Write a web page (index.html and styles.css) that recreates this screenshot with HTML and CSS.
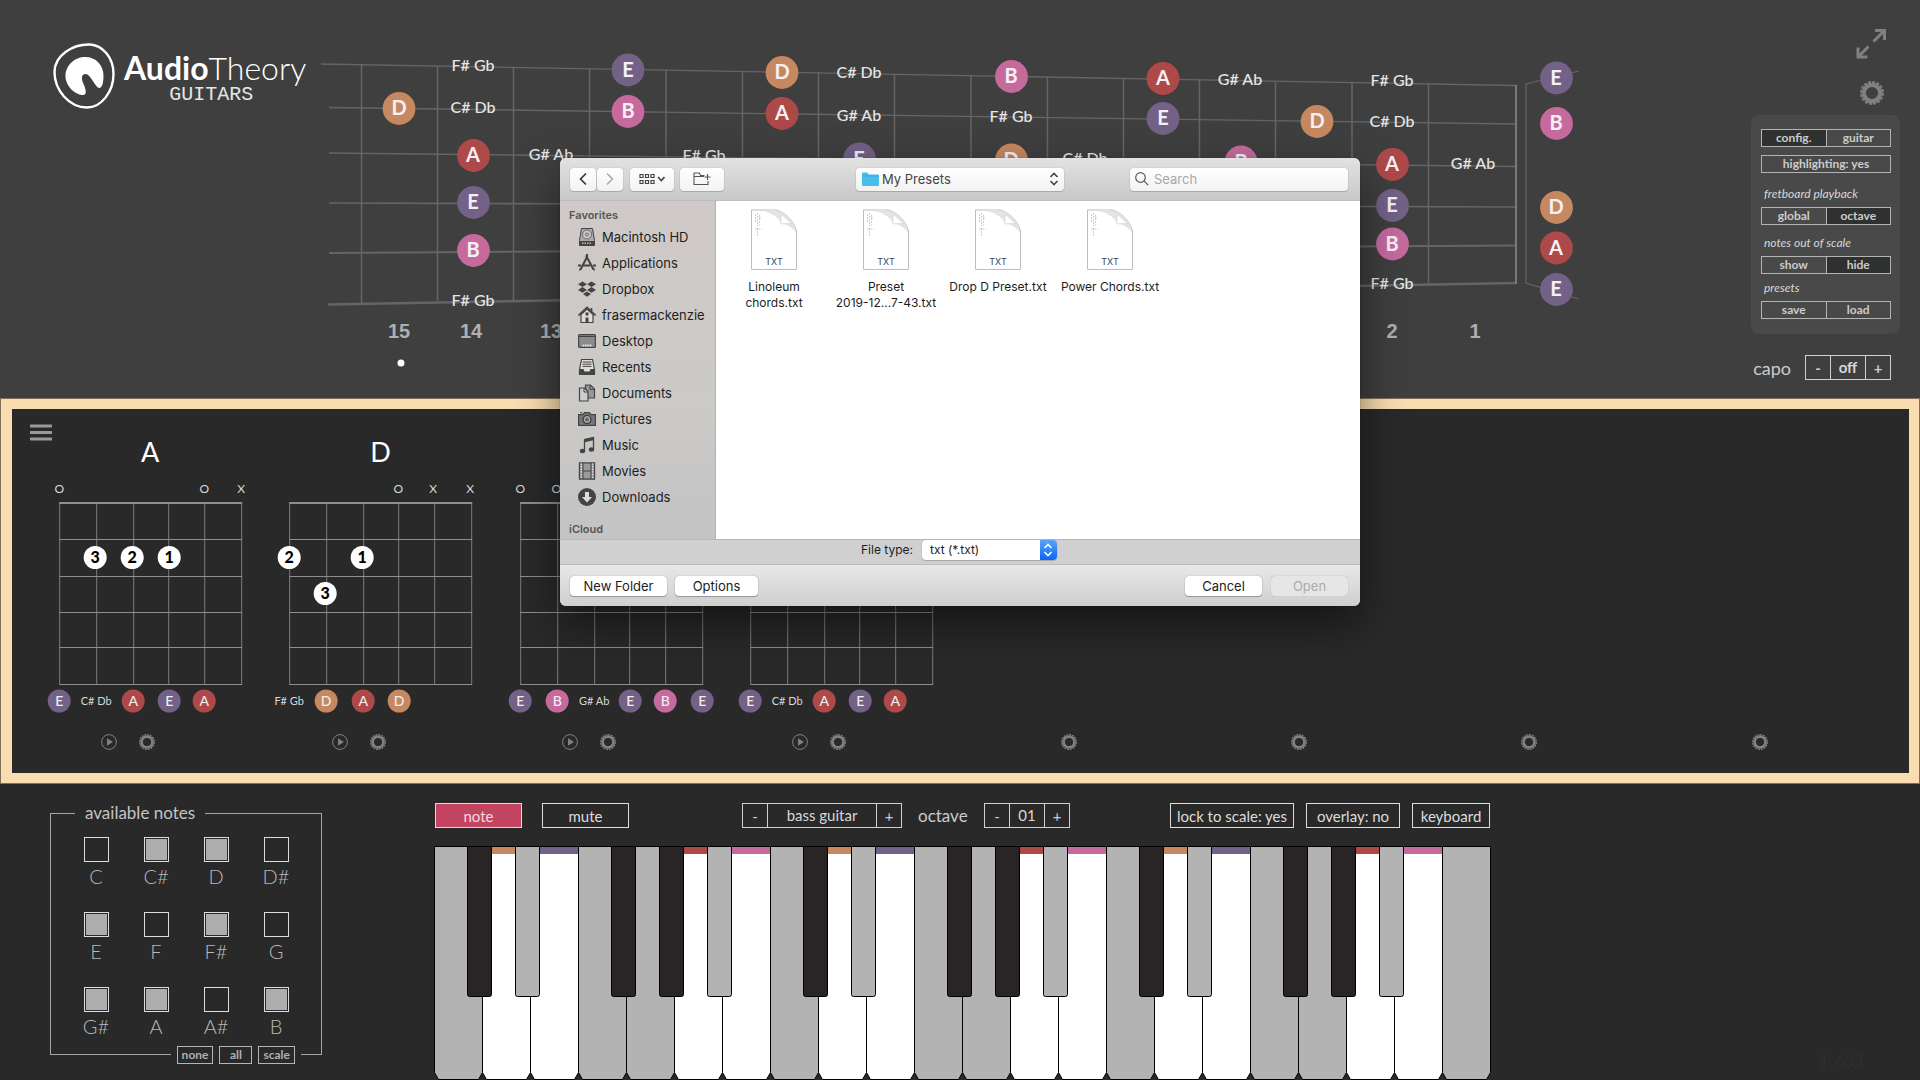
FILE: index.html
```html
<!DOCTYPE html>
<html lang="en">
<head>
<meta charset="utf-8">
<title>AudioTheory Guitars</title>
<link rel="stylesheet" href="styles.css">
</head>
<body>
<svg class="defs" aria-hidden="true">
  <symbol id="gear" viewBox="0 0 24 24">
    <circle cx="12" cy="12" r="8.200" fill="none" stroke="currentColor" stroke-width="4.200"/>
    <circle cx="12" cy="12" r="11" fill="none" stroke="currentColor" stroke-width="2" stroke-dasharray="2.900 1.420"/>
  </symbol>
  <symbol id="play" viewBox="0 0 16 16">
    <circle cx="8" cy="8" r="7.400" fill="none" stroke="currentColor" stroke-width="1"/>
    <path d="M6 4.300 12 8 6 11.700Z" fill="currentColor"/>
  </symbol>
  <symbol id="updown" viewBox="0 0 10 14">
    <path d="M1.500 5 5 1.500 8.500 5M1.500 9 5 12.500 8.500 9" fill="none" stroke="currentColor" stroke-width="1.600"/>
  </symbol>
  <symbol id="txtfile" viewBox="0 0 48 62">
    <path d="M1.500 1H26C35 3 44 12 46.500 22V60.500H1.500Z" fill="#fff" stroke="#bdbdbd"/>
    <path d="M10 1.500H26C35 3 44 12 46 24 42 18 38 15.500 31 15 29 8 20 3 10 1.500Z" fill="#e4e4e4"/>
    <path d="M31 5 42 15C38 14 35 14.500 31 15Z" fill="#fff" stroke="#cfcfcf" stroke-width=".6"/>
    <path d="M5.500 5V14M7.500 4V17M9.500 6V16M7.500 19V28M5 20H12M9 9H11" stroke="#ccc" stroke-width="1" stroke-dasharray="2 1"/>
  </symbol>
  <symbol id="chordgrid" viewBox="0 0 230 200">
    <path d="M61.500 10V191M98.500 10V191M133.500 10V191M169.500 10V191M24.500 10V191M206.500 10V191" stroke="#7d7d7d"/>
    <path d="M24 46.500H207M24 83.500H207M24 119.500H207M24 154.500H207M24 191.500H207" stroke="#8e8e8e"/>
    <path d="M24 10H207" stroke="#8e8e8e" stroke-width="2"/>
  </symbol>
  <symbol id="octavekeys" viewBox="0 0 338 234" overflow="visible">
    <g stroke="#000" stroke-width="1">
      <path class="key-off" d="M.5.5h48v226l-4 7h-40l-4-7z"/>
      <path class="key-on" d="M48.500.5h48v226l-4 7h-40l-4-7z"/>
      <path class="key-on" d="M96.500.5h48v226l-4 7h-40l-4-7z"/>
      <path class="key-off" d="M144.500.5h48v226l-4 7h-40l-4-7z"/>
      <path class="key-off" d="M192.500.5h48v226l-4 7h-40l-4-7z"/>
      <path class="key-on" d="M240.500.5h48v226l-4 7h-40l-4-7z"/>
      <path class="key-on" d="M288.500.5h48v226l-4 7h-40l-4-7z"/>
    </g>
    <path class="fill-d" d="M49 1h47v7H49z"/><path class="fill-e" d="M97 1h47v7H97z"/>
    <path class="fill-a" d="M241 1h47v7h-47z"/><path class="fill-b" d="M289 1h47v7h-47z"/>
    <g stroke="#000" stroke-width="1">
      <path class="key-black" d="M33.500.5h24v148q0 2-2 2h-20q-2 0-2-2z"/>
      <path class="key-off" d="M81.500.5h24v148q0 2-2 2h-20q-2 0-2-2z"/>
      <path class="key-black" d="M177.500.5h24v148q0 2-2 2h-20q-2 0-2-2z"/>
      <path class="key-black" d="M225.500.5h24v148q0 2-2 2h-20q-2 0-2-2z"/>
      <path class="key-off" d="M273.500.5h24v148q0 2-2 2h-20q-2 0-2-2z"/>
    </g>
  </symbol>
</svg>

<header class="neck">
  <h1 class="brand">
    <svg class="brand-mark" viewBox="0 0 62 66" aria-hidden="true">
      <path d="M37 1.500C49 2 60.500 14 60.500 31 60.500 48 49 64.500 34 64.500 16 64.500 1.500 47 1.500 29 1.500 12 20 1 37 1.500Z" fill="none" stroke="#fff" stroke-width="2.400"/>
      <path d="M32 14C43 14 50.500 22 50.500 33 50.500 40 49 45 46.500 45 42 45 38 31 32.500 31 28 31 28 36 31 42 33 47 34 52 30 52 23 52 12.500 44 12.500 33 12.500 22 22 14 32 14Z" fill="#fff"/>
    </svg>
    <span class="brand-name"><span class="brand-line"><b>Audio</b>Theory</span><small>GUITARS</small></span>
  </h1>

  <svg class="fretboard" viewBox="315 0 1275 398" role="img" aria-label="Fretboard">
    <g stroke="#656565" fill="none">
      <path d="M361.500 64V303M437.500 66V301M513.500 67V300M589.500 68V299M666 70V297M742.500 71V296M818.500 72V295M894.500 74V293M971 75V292M1047.500 77V291M1123.500 78V290M1199.500 79V289M1275.500 81V287M1352 82V286M1428.500 84V285" stroke-width="1.500"/>
      <path d="M321 64 1516 85.500M329 107.500 1516 124" stroke-width="1.300"/>
      <path d="M329 153 1516 166.500M329 203 1516 207" stroke-width="1.600"/>
      <path d="M329 253 1516 245.500" stroke-width="2"/>
      <path d="M328 304.500 1516 283" stroke-width="2.600"/>
      <path d="M1516 85V284" stroke="#8c8c8c" stroke-width="1.500"/>
      <path d="M1579 71 1526 84V283L1579 299" stroke-width="1.200"/>
    </g>
    <g class="fill-d"><circle cx="399" cy="108.500" r="16.400"/><circle cx="782" cy="72.500" r="16.400"/><circle cx="1011.500" cy="160" r="16.400"/><circle cx="1317" cy="121.500" r="16.400"/><circle cx="1556.500" cy="207.500" r="16.400"/></g>
    <g class="fill-a"><circle cx="473.500" cy="155.500" r="16.400"/><circle cx="782" cy="113.500" r="16.400"/><circle cx="1163" cy="78.500" r="16.400"/><circle cx="1392.500" cy="164.500" r="16.400"/><circle cx="1556.500" cy="248" r="16.400"/></g>
    <g class="fill-e"><circle cx="473.500" cy="202.500" r="16.400"/><circle cx="628" cy="70" r="16.400"/><circle cx="859.500" cy="159" r="16.400"/><circle cx="1163" cy="118.500" r="16.400"/><circle cx="1392.500" cy="205.500" r="16.400"/><circle cx="1556.500" cy="78" r="16.400"/><circle cx="1556.500" cy="289.500" r="16.400"/></g>
    <g class="fill-b"><circle cx="473.500" cy="250.500" r="16.400"/><circle cx="628" cy="111.500" r="16.400"/><circle cx="1011.500" cy="76.500" r="16.400"/><circle cx="1241" cy="162" r="16.400"/><circle cx="1392.500" cy="244" r="16.400"/><circle cx="1556.500" cy="123.500" r="16.400"/></g>
    <g class="note-name">
      <text x="399" y="115">D</text><text x="782" y="79">D</text><text x="1011" y="167">D</text><text x="1317" y="128">D</text><text x="1556" y="214">D</text>
      <text x="473" y="162">A</text><text x="782" y="120">A</text><text x="1163" y="85">A</text><text x="1392" y="171">A</text><text x="1556" y="255">A</text>
      <text x="473" y="209">E</text><text x="628" y="77">E</text><text x="859" y="166">E</text><text x="1163" y="125">E</text><text x="1392" y="212">E</text><text x="1556" y="85">E</text><text x="1556" y="296">E</text>
      <text x="473" y="257">B</text><text x="628" y="118">B</text><text x="1011" y="83">B</text><text x="1241" y="169">B</text><text x="1392" y="251">B</text><text x="1556" y="130">B</text>
    </g>
    <g class="accidental">
      <text x="473" y="71">F# Gb</text><text x="473" y="113">C# Db</text><text x="473" y="306">F# Gb</text><text x="551" y="160">G# Ab</text>
      <text x="704" y="161">F# Gb</text><text x="859" y="78">C# Db</text><text x="859" y="121">G# Ab</text><text x="1011" y="122">F# Gb</text>
      <text x="1085" y="164">C# Db</text><text x="1240" y="85">G# Ab</text><text x="1392" y="86">F# Gb</text><text x="1392" y="127">C# Db</text>
      <text x="1392" y="289">F# Gb</text><text x="1473" y="169">G# Ab</text>
    </g>
    <g class="fret-number">
      <text x="399" y="338">15</text><text x="471" y="338">14</text><text x="551" y="338">13</text><text x="1392" y="338">2</text><text x="1475" y="338">1</text>
    </g>
    <circle cx="401" cy="363" r="3.500" fill="#fff"/>
  </svg>

  <aside class="tools">
    <button class="icon-btn expand" aria-label="Full screen">
      <svg viewBox="0 0 30 30" width="30" height="30"><path d="M19 1.500H28.500V11M28 2 17.500 12.500M2 18.500V28H11.500M2.500 27.500 12.500 17.500" fill="none" stroke="currentColor" stroke-width="3"/></svg>
    </button>
    <button class="icon-btn settings" aria-label="Settings"><svg width="24" height="24"><use href="#gear"/></svg></button>
    <div class="panel">
      <div class="pair"><button class="on">config.</button><button>guitar</button></div>
      <div class="pair highlight"><button>highlighting: yes</button></div>
      <p class="panel-label">fretboard playback</p>
      <div class="pair"><button>global</button><button class="on">octave</button></div>
      <p class="panel-label">notes out of scale</p>
      <div class="pair"><button>show</button><button class="on">hide</button></div>
      <p class="panel-label tight">presets</p>
      <div class="pair"><button>save</button><button>load</button></div>
    </div>
    <div class="capo">
      <span class="light-label">capo</span>
      <div class="stepper bold"><button aria-label="Capo down">-</button><output>off</output><button aria-label="Capo up">+</button></div>
    </div>
  </aside>
</header>

<main class="chords">
  <button class="icon-btn menu" aria-label="Menu"><svg width="22" height="17"><path d="M1 2H21M1 8.500H21M1 15H21" stroke="currentColor" stroke-width="3" stroke-linecap="round"/></svg></button>
  <div class="chord-row">
    <article class="chord">
      <h2>A</h2>
      <svg class="diagram" viewBox="0 0 230 240">
        <g class="marks"><text x="24" y="13">O</text><text x="169" y="13">O</text><text x="206" y="13">X</text></g>
        <use href="#chordgrid" y="13" width="230" height="200"/>
        <g fill="#fff"><circle cx="60" cy="77.500" r="11.500"/><circle cx="97" cy="77.500" r="11.500"/><circle cx="134" cy="77.500" r="11.500"/></g>
        <g class="finger"><text x="60" y="83">3</text><text x="97" y="83">2</text><text x="134" y="83">1</text></g>
        <circle class="fill-e" cx="24" cy="221" r="11.500"/><circle class="fill-a" cx="98" cy="221" r="11.500"/><circle class="fill-e" cx="134" cy="221" r="11.500"/><circle class="fill-a" cx="169" cy="221" r="11.500"/>
        <g class="small-note"><text x="24" y="226">E</text><text x="98" y="226">A</text><text x="134" y="226">E</text><text x="169" y="226">A</text></g>
        <text class="small-acc" x="61" y="225">C# Db</text>
      </svg>
      <div class="chord-tools"><button class="icon-btn" aria-label="Play"><svg width="16" height="16"><use href="#play"/></svg></button><button class="icon-btn" aria-label="Chord settings"><svg width="16" height="16"><use href="#gear"/></svg></button></div>
    </article>
    <article class="chord">
      <h2>D</h2>
      <svg class="diagram" viewBox="0 0 230 240">
        <g class="marks"><text x="133" y="13">O</text><text x="168" y="13">X</text><text x="205" y="13">X</text></g>
        <use href="#chordgrid" y="13" width="230" height="200"/>
        <g fill="#fff"><circle cx="24" cy="77.500" r="11.500"/><circle cx="97" cy="77.500" r="11.500"/><circle cx="60" cy="113.500" r="11.500"/></g>
        <g class="finger"><text x="24" y="83">2</text><text x="97" y="83">1</text><text x="60" y="119">3</text></g>
        <circle class="fill-d" cx="61" cy="221" r="11.500"/><circle class="fill-a" cx="98" cy="221" r="11.500"/><circle class="fill-d" cx="134" cy="221" r="11.500"/>
        <g class="small-note"><text x="61" y="226">D</text><text x="98" y="226">A</text><text x="134" y="226">D</text></g>
        <text class="small-acc" x="24" y="225">F# Gb</text>
      </svg>
      <div class="chord-tools"><button class="icon-btn" aria-label="Play"><svg width="16" height="16"><use href="#play"/></svg></button><button class="icon-btn" aria-label="Chord settings"><svg width="16" height="16"><use href="#gear"/></svg></button></div>
    </article>
    <article class="chord">
      <h2></h2>
      <svg class="diagram" viewBox="0 0 230 240">
        <g class="marks"><text x="24" y="13">O</text><text x="60" y="13">O</text></g>
        <use href="#chordgrid" y="13" width="230" height="200"/>
        <circle class="fill-e" cx="24" cy="221" r="11.500"/><circle class="fill-b" cx="61" cy="221" r="11.500"/><circle class="fill-e" cx="134" cy="221" r="11.500"/><circle class="fill-b" cx="169" cy="221" r="11.500"/><circle class="fill-e" cx="206" cy="221" r="11.500"/>
        <g class="small-note"><text x="24" y="226">E</text><text x="61" y="226">B</text><text x="134" y="226">E</text><text x="169" y="226">B</text><text x="206" y="226">E</text></g>
        <text class="small-acc" x="98" y="225">G# Ab</text>
      </svg>
      <div class="chord-tools"><button class="icon-btn" aria-label="Play"><svg width="16" height="16"><use href="#play"/></svg></button><button class="icon-btn" aria-label="Chord settings"><svg width="16" height="16"><use href="#gear"/></svg></button></div>
    </article>
    <article class="chord">
      <h2></h2>
      <svg class="diagram" viewBox="0 0 230 240">
        <use href="#chordgrid" y="13" width="230" height="200"/>
        <circle class="fill-e" cx="24" cy="221" r="11.500"/><circle class="fill-a" cx="98" cy="221" r="11.500"/><circle class="fill-e" cx="134" cy="221" r="11.500"/><circle class="fill-a" cx="169" cy="221" r="11.500"/>
        <g class="small-note"><text x="24" y="226">E</text><text x="98" y="226">A</text><text x="134" y="226">E</text><text x="169" y="226">A</text></g>
        <text class="small-acc" x="61" y="225">C# Db</text>
      </svg>
      <div class="chord-tools"><button class="icon-btn" aria-label="Play"><svg width="16" height="16"><use href="#play"/></svg></button><button class="icon-btn" aria-label="Chord settings"><svg width="16" height="16"><use href="#gear"/></svg></button></div>
    </article>
    <article class="chord empty"><div class="chord-tools"><button class="icon-btn" aria-label="Chord settings"><svg width="16" height="16"><use href="#gear"/></svg></button></div></article>
    <article class="chord empty"><div class="chord-tools"><button class="icon-btn" aria-label="Chord settings"><svg width="16" height="16"><use href="#gear"/></svg></button></div></article>
    <article class="chord empty"><div class="chord-tools"><button class="icon-btn" aria-label="Chord settings"><svg width="16" height="16"><use href="#gear"/></svg></button></div></article>
    <article class="chord empty"><div class="chord-tools"><button class="icon-btn" aria-label="Chord settings"><svg width="16" height="16"><use href="#gear"/></svg></button></div></article>
  </div>
</main>

<section class="bottom">
  <fieldset class="notes">
    <legend>available notes</legend>
    <div class="note-grid">
      <label><input type="checkbox">C</label><label><input type="checkbox" checked>C#</label><label><input type="checkbox" checked>D</label><label><input type="checkbox">D#</label>
      <label><input type="checkbox" checked>E</label><label><input type="checkbox">F</label><label><input type="checkbox" checked>F#</label><label><input type="checkbox">G</label>
      <label><input type="checkbox" checked>G#</label><label><input type="checkbox" checked>A</label><label><input type="checkbox">A#</label><label><input type="checkbox" checked>B</label>
    </div>
    <div class="note-presets"><button>none</button><button>all</button><button>scale</button></div>
  </fieldset>

  <div class="piano">
    <div class="piano-bar">
      <button class="box wide active">note</button>
      <button class="box wide mute">mute</button>
      <div class="stepper voice"><button aria-label="Previous sound">-</button><output>bass guitar</output><button aria-label="Next sound">+</button></div>
      <span class="light-label octave">octave</span>
      <div class="stepper"><button aria-label="Octave down">-</button><output>01</output><button aria-label="Octave up">+</button></div>
      <div class="piano-options"><button class="box lock">lock to scale: yes</button><button class="box overlay">overlay: no</button><button class="box kbd">keyboard</button></div>
    </div>
    <svg class="keys" viewBox="0 0 1057 234" role="img" aria-label="Piano keyboard">
      <use href="#octavekeys" width="338" height="234"/>
      <use href="#octavekeys" x="336" width="338" height="234"/>
      <use href="#octavekeys" x="672" width="338" height="234"/>
      <path class="key-off" stroke="#000" d="M1008.500.5h48v226l-4 7h-40l-4-7z"/>
    </svg>
  </div>
  <p class="version">1.6.0</p>
</section>

<div class="dialog" role="dialog" aria-label="Open preset">
  <div class="dlg-toolbar">
    <div class="nav-btns">
      <button class="dlg-tool nav" aria-label="Back"><svg width="8" height="14"><path d="M7 1.500 1.500 7 7 12.500" fill="none" stroke="#333" stroke-width="1.600"/></svg></button>
      <button class="dlg-tool nav" aria-label="Forward"><svg width="8" height="14"><path d="M1 1.500 6.500 7 1 12.500" fill="none" stroke="#aaa" stroke-width="1.600"/></svg></button>
    </div>
    <button class="dlg-tool view" aria-label="View"><svg width="26" height="12" fill="none" stroke="#444" stroke-width="1.200"><path d="M1 1.500h3v3H1zM6.500 1.500h3v3h-3zM12 1.500h3v3h-3zM1 7.500h3v3H1zM6.500 7.500h3v3h-3zM12 7.500h3v3h-3z"/><path d="M19 4 22.300 7.500 25.500 4" stroke-width="1.600"/></svg></button>
    <button class="dlg-tool view" aria-label="New folder"><svg width="18" height="14" fill="none" stroke="#555" stroke-width="1.100"><path d="M11.500 3.500H7.500L6.300 1H1V12.500H15V9M1 4.500H11M14.500 2V8M11.500 5H17.500"/></svg></button>
    <div class="select path-select">
      <svg width="17" height="14" aria-hidden="true"><path d="M0 1.500Q0 .5 1 .5H5L7 2.500H16Q17 2.500 17 3.500V13Q17 14 16 14H1Q0 14 0 13Z" fill="#4bbdea"/><path d="M0 4H17" stroke="#35a6dc" stroke-width=".8"/></svg>
      <select aria-label="Folder"><option>My Presets</option></select>
      <svg class="arrows" width="10" height="14"><use href="#updown"/></svg>
    </div>
    <label class="search">
      <svg width="14" height="14" aria-hidden="true"><path d="M9.200 9.200 13.200 13.200M5.500.7a4.800 4.800 0 1 1 0 9.600 4.800 4.800 0 0 1 0-9.600Z" fill="none" stroke="#555" stroke-width="1.200"/></svg>
      <input type="text" placeholder="Search" aria-label="Search">
    </label>
  </div>
  <div class="dlg-body">
    <nav class="sidebar">
      <h3>Favorites</h3>
      <ul>
        <li><a href="#hd"><svg viewBox="0 0 18 18"><path d="M3.500.5h11l2 12v5h-15v-5z" fill="#aaa" stroke="#444"/><path d="M1.500 13h15v4.500h-15z" fill="#444"/><circle cx="9" cy="6.500" r="4.500" fill="#c8c8c8" stroke="#555" stroke-width=".8"/><circle cx="9" cy="6.500" r="1.500" fill="none" stroke="#555" stroke-width=".8"/><path d="M4 15.300h10" stroke="#bbb" stroke-width="1.500" stroke-dasharray="1.500 1"/></svg>Macintosh HD</a></li>
        <li><a href="#apps"><svg viewBox="0 0 18 18"><path d="M9 3 2.500 15.500M8 1.500 15.500 15.500M0 11.500H3M5 11.500H12M15 11.500H18" stroke="#444" stroke-width="2" fill="none"/><path d="M1 17l.5-2.500 2 1zM17 17l-.5-2.500-2 1zM8 0h2v3H8z" fill="#444"/></svg>Applications</a></li>
        <li><a href="#dropbox"><svg viewBox="0 0 18 18"><path d="M4.500 1.500 9 4.300 4.500 7.100 0 4.300ZM13.500 1.500 18 4.300 13.500 7.100 9 4.300ZM4.500 7.100 9 9.900 4.500 12.700 0 9.900ZM13.500 7.100 18 9.900 13.500 12.700 9 9.900ZM9 11.500 13 14 9 16.800 5 14Z" fill="#444"/><path d="M9 4.500 13 7.100 9 9.700 5 7.100Z" fill="#cbc8c7"/></svg>Dropbox</a></li>
        <li><a href="#home"><svg viewBox="0 0 18 18"><path d="M3 8.500V16.500H15V8.500L9 3Z" fill="#ddd" stroke="#444" stroke-width="1.200"/><path d="M.5 9.500 9 1.500 17.500 9.500M13.500 2V5.500" fill="none" stroke="#444" stroke-width="1.700"/><path d="M7.500 11.500h3v5h-3zM7.500 6.500h3v3h-3z" fill="#444"/></svg>frasermackenzie</a></li>
        <li><a href="#desktop"><svg viewBox="0 0 18 18"><rect x=".6" y="2.600" width="16.800" height="12.800" rx="1" fill="#8b8b8b" stroke="#444" stroke-width="1.200"/><path d="M1 4.500h16" stroke="#444"/><path d="M4.500 13.500h9" stroke="#ddd" stroke-width="2" stroke-dasharray="1.800 .6"/></svg>Desktop</a></li>
        <li><a href="#recents"><svg viewBox="0 0 18 18"><path d="M3.500 1.500h11l2 10v5h-15v-5z" fill="#ddd" stroke="#444" stroke-width="1.200"/><path d="M1 11h4.500l1 2.500h5l1-2.500H17v6H1z" fill="#444"/><path d="M4.500 4h9M4.500 6.200h9M4.500 8.400h9" stroke="#444"/></svg>Recents</a></li>
        <li><a href="#documents"><svg viewBox="0 0 18 18"><path d="M7.500 1h5l4 4v9h-9z" fill="#999" stroke="#444" stroke-width="1.200"/><path d="M1.500 4h5l3.500 3.500V17H1.500z" fill="#ccc" stroke="#444" stroke-width="1.200"/><path d="M6 4v4h4M12 1v4.500h4.500" fill="none" stroke="#444"/></svg>Documents</a></li>
        <li><a href="#pictures"><svg viewBox="0 0 18 18"><path d="M.6 4.600H5L6.500 2.600h5L13 4.600h4.400v10.800H.6z" fill="#777" stroke="#444" stroke-width="1.200"/><circle cx="9" cy="9.500" r="4" fill="#aaa" stroke="#333" stroke-width="1.200"/><circle cx="9" cy="9.500" r="2" fill="#666"/><path d="M2 2.800h2.500" stroke="#444"/></svg>Pictures</a></li>
        <li><a href="#music"><svg viewBox="0 0 18 18"><path d="M6.500 15V3.500L15.500 1.500V13" fill="none" stroke="#444" stroke-width="1.300"/><path d="M6 3.500 16 1V4L6 6.500Z" fill="#444"/><ellipse cx="4.500" cy="15" rx="2.700" ry="2.200" fill="#444"/><ellipse cx="13.500" cy="13.500" rx="2.700" ry="2.200" fill="#444"/></svg>Music</a></li>
        <li><a href="#movies"><svg viewBox="0 0 18 18"><path d="M1.500.8h15v16.400h-15z" fill="#999" stroke="#444" stroke-width="1.300"/><path d="M5 1v16M13 1v16M5 9h8" stroke="#444"/><path d="M3.200 1.500v15M14.800 1.500v15" stroke="#eee" stroke-width="1.300" stroke-dasharray="1.200 1.400"/></svg>Movies</a></li>
        <li><a href="#downloads"><svg viewBox="0 0 18 18"><circle cx="9" cy="9" r="9" fill="#444"/><path d="M7 4h4v5h3L9 14.500 4 9h3z" fill="#ddd"/></svg>Downloads</a></li>
      </ul>
      <h3>iCloud</h3>
    </nav>
    <div class="files">
      <figure><svg width="48" height="62"><use href="#txtfile"/><text x="24" y="56" class="file-kind">TXT</text></svg><figcaption>Linoleum<br>chords.txt</figcaption></figure>
      <figure><svg width="48" height="62"><use href="#txtfile"/><text x="24" y="56" class="file-kind">TXT</text></svg><figcaption>Preset<br>2019-12...7-43.txt</figcaption></figure>
      <figure><svg width="48" height="62"><use href="#txtfile"/><text x="24" y="56" class="file-kind">TXT</text></svg><figcaption>Drop D Preset.txt</figcaption></figure>
      <figure><svg width="48" height="62"><use href="#txtfile"/><text x="24" y="56" class="file-kind">TXT</text></svg><figcaption>Power Chords.txt</figcaption></figure>
    </div>
  </div>
  <div class="dlg-type">
    <label for="filetype">File type:</label>
    <div class="select type-select">
      <select id="filetype"><option>txt (*.txt)</option></select>
      <span class="blue"><svg width="10" height="14"><use href="#updown"/></svg></span>
    </div>
  </div>
  <div class="dlg-footer">
    <button class="new-folder">New Folder</button><button class="options">Options</button>
    <button class="cancel">Cancel</button><button class="open" disabled>Open</button>
  </div>
</div>
</body>
</html>
```
FILE: styles.css
```css
* { box-sizing: border-box; }
body {
  margin: 0;
  min-height: 100vh;
  display: flex;
  flex-direction: column;
  position: relative;
  background: #292929;
  color: #d8d8d8;
  font-family: Lato, "Liberation Sans", sans-serif;
}
.defs { position: absolute; width: 0; height: 0; }
h1, h2, h3, p, ul, figure { margin: 0; padding: 0; }
ul { list-style: none; }
button, input, select { font: inherit; color: inherit; margin: 0; }
button { padding: 0; background: none; border: 1px solid #b4b4b4; }
svg { display: block; flex: none; }
.icon-btn { border: 0; color: #808080; display: flex; }

.fill-a { fill: #ae4949; }
.fill-b { fill: #c66a9e; }
.fill-d { fill: #c68860; }
.fill-e { fill: #736187; }

/* Neck */
.neck { display: flex; background: #3f3f3f; height: 398px; }
.brand { display: flex; width: 315px; padding: 43px 0 0 53px; gap: 9px; color: #fff; font-weight: 400; }
.brand-mark { width: 62px; height: 66px; }
.brand-name { display: flex; flex-direction: column; align-items: center; }
.brand-line { font-size: 32px; line-height: 40px; font-weight: 300; margin-top: 5px; }
.brand-line b { font-weight: 700; }
.brand small { font: 20px/18px "Liberation Mono", monospace; color: #e6e6e6; margin-right: 8px; margin-top: -2px; }
.fretboard { flex: 1; min-width: 0; height: 398px; }
.note-name, .accidental, .fret-number, .marks, .finger, .small-note, .small-acc, .file-kind { text-anchor: middle; }
.note-name { font-size: 20px; font-weight: 700; fill: #f4f0f4; }
.accidental { font-size: 16px; fill: #e6e6e6; font-weight: 500; }
.fret-number { font: 700 20px "Liberation Sans", sans-serif; fill: #b0b0b0; }

.tools { width: 330px; padding: 29px 20px 0 0; display: flex; flex-direction: column; align-items: flex-end; }
.expand { margin: 0 14px 22px 0; }
.settings { margin: 0 16px 10px 0; }
.panel { width: 149px; background: #494949; border-radius: 8px; padding: 14px 9px 15px 10px; display: flex; flex-direction: column; }
.pair { display: flex; height: 18px; }
.pair button { flex: 1; font-size: 12px; line-height: 14px; font-weight: 700; color: #ccc; }
.pair button + button { border-left: 0; }
.pair .on { background: #2e3130; }
.highlight { margin: 8px 0 13px; }
.panel-label { font-size: 12px; line-height: 16px; font-style: italic; padding: 0 3px; margin: 0 0 5px; }
.pair + .panel-label:not(.tight) { margin-top: 10px; }
.highlight + .panel-label:not(.tight) { margin-top: 0; }
.panel-label.tight { margin-top: 6px; }
.capo { display: flex; align-items: center; gap: 14px; margin: 21px 9px 0 0; }
.light-label { font-size: 18px; line-height: 24px; color: #ccc; }
.stepper { display: flex; height: 25px; border: 1px solid #d0d0d0; }
.stepper button { width: 24px; border: 0; font-size: 15px; line-height: 20px; color: #ccc; }
.stepper output { width: 36px; text-align: center; font-size: 15px; line-height: 22px; border: solid #d0d0d0; border-width: 0 1px; }
.stepper.bold { font-weight: 700; }
.voice output { width: 110px; }

/* Chords */
.chords { border: solid #fadcb1; border-width: 11px 11px 11px 12px; background: #292929; height: 386px; padding: 16px 31px 0 23px; outline: 1px solid #7e7058; outline-offset: -1px; position: relative; }
.menu { position: absolute; left: 18px; top: 15px; color: #999; }
.chord-row { display: grid; grid-template-columns: repeat(8, 1fr); }
.chord { display: flex; flex-direction: column; }
.chord h2 { height: 55px; font-size: 27px; line-height: 54px; font-weight: 400; text-align: center; color: #fff; }
.diagram { width: 100%; height: 240px; }
.marks { font-size: 12px; fill: #d8d8d8; }
.finger { font-size: 16px; font-weight: 900; fill: #000; }
.small-note { font-size: 14px; font-weight: 500; fill: #eee; }
.small-acc { font-size: 11px; fill: #d8d8d8; }
.chord-tools { display: flex; justify-content: center; gap: 22px; padding: 14px 44px 0 0; }
.chord.empty { justify-content: flex-end; }
.chord.empty .chord-tools { padding-right: 6px; }

/* Notes and piano */
.bottom { display: flex; flex: 1; padding: 19px 0 0 50px; align-items: flex-start; }
.notes { width: 272px; margin: 0; padding: 14px 15px 16px; border: 1px solid #a4a4a4; position: relative; flex: none; }
.notes legend { margin-left: 9px; padding: 0 10px; font-size: 17px; line-height: 20px; color: #c4c4c4; }
.note-grid { display: grid; grid-template-columns: repeat(4, 60px); row-gap: 24px; }
.note-grid label { display: flex; flex-direction: column; align-items: center; gap: 3px; font-size: 20px; line-height: 23px; color: #b8b8b8; font-weight: 300; }
.note-grid input { appearance: none; width: 25px; height: 25px; border: 1px solid #ddd; padding: 1px; background-clip: content-box; }
.note-grid input:checked { background-color: #adadad; }
.note-presets { position: absolute; right: 20px; bottom: -10px; display: flex; gap: 6px; background: #292929; padding: 0 6px; }
.note-presets button { height: 18px; padding: 0 4px; font-size: 12px; line-height: 14px; font-weight: 700; color: #b0b0b0; min-width: 33px; }
.piano { width: 1057px; margin-left: 112px; }
.piano-bar { display: flex; align-items: center; height: 25px; }
.box { height: 25px; border-color: #ddd; font-size: 15px; line-height: 20px; color: #ddd; white-space: nowrap; }
.wide { width: 87px; margin-left: 1px; }
.active { background: #c24460; color: #f3dbe0; }
.mute { margin-left: 20px; }
.voice { margin-left: 113px; }
.octave { margin: 0 16px; width: 50px; font-size: 17px; }
.piano-options { display: flex; gap: 12px; margin: 0 1px 0 auto; }
.lock { width: 124px; }
.overlay { width: 94px; }
.kbd { width: 78px; }
.keys { width: 100%; margin-top: 18px; }
.key-on { fill: #fff; }
.key-off { fill: #b3b3b3; }
.key-black { fill: #2a2525; }
.version { margin: auto 58px 6px auto; font-size: 20px; line-height: 28px; color: #333; font-weight: 300; }

/* File dialog */
.dialog { position: absolute; top: 158px; left: 0; right: 0; margin: 0 auto; width: 800px; border-radius: 6px; overflow: hidden; background: #d0d0d0; color: #1d1d1d; font: 13px/16px Inter, "Liberation Sans", sans-serif; box-shadow: 0 18px 44px rgba(0, 0, 0, .5), 0 0 1px rgba(0, 0, 0, .6); }
.dlg-toolbar { display: flex; align-items: center; height: 43px; padding: 0 12px 0 10px; background: linear-gradient(#e2e2e2, #c8c8c8); border-bottom: 1px solid #bdbdbd; }
.dlg-tool, .select, .search { height: 23px; border: 0; border-radius: 4px; background: linear-gradient(#fff, #f2f2f2); box-shadow: 0 0 1px #888, 0 1px 1px #aaa; }
.dlg-tool { display: flex; align-items: center; justify-content: center; }
.nav-btns { display: flex; gap: 1px; margin-right: 7px; }
.nav { width: 26px; }
.view { width: 44px; margin-right: 6px; }
.select { display: flex; align-items: center; position: relative; }
.select select { appearance: none; border: 0; background: none; flex: 1; padding: 0; }
.path-select { width: 208px; margin-left: 126px; padding: 0 5px 0 6px; gap: 3px; color: #444; }
.search { width: 218px; margin-left: auto; display: flex; align-items: center; padding: 0 5px; gap: 5px; }
.search input { border: 0; background: none; padding: 0; width: 180px; }
.search input::placeholder { color: #a8a8a8; opacity: 1; }
.dlg-body { display: flex; height: 338px; background: #fff; }
.sidebar { width: 156px; background: linear-gradient(#cfc9c8, #cbcac7 60%, #c4c3c5); border-right: 1px solid #b2b2b2; overflow: hidden; padding: 6px 0 0 9px; }
.sidebar h3 { font-size: 11px; line-height: 16px; font-weight: 600; color: #555; }
.sidebar ul { padding: 1px 0 11px 9px; }
.sidebar a { display: flex; align-items: center; gap: 6px; height: 26px; color: #1d1d1d; text-decoration: none; white-space: nowrap; }
.sidebar svg { width: 18px; height: 18px; }
.files { display: flex; align-items: flex-start; padding: 8px 0 0 2px; }
.files figure { width: 112px; display: flex; flex-direction: column; align-items: center; gap: 8px; }
.files figcaption { font-size: 12px; line-height: 16px; text-align: center; white-space: nowrap; }
.file-kind { font: 9px Inter, sans-serif; fill: #444; }
.dlg-type { display: flex; height: 25px; padding: 0 0 4px 301px; gap: 9px; align-items: center; border-top: 1px solid #b8b8b8; font-size: 12px; }
.type-select { width: 135px; height: 20px; background: #fff; padding-left: 8px; }
.blue { width: 17px; height: 20px; border-radius: 0 4px 4px 0; background: linear-gradient(#58a4fb, #0a66f6); color: #fff; display: flex; align-items: center; justify-content: center; }
.dlg-footer { display: flex; height: 42px; padding: 11px 12px 0 10px; border-top: 1px solid #bcbcbc; background: linear-gradient(#e8e8e8, #cfcfcf); }
.dlg-footer button { height: 20px; border: 0; border-radius: 4px; background: #fff; box-shadow: 0 0 1px #777, 0 1px 1px #999; }
.dlg-footer .new-folder { width: 97px; }
.dlg-footer .options { width: 83px; margin-left: 8px; }
.dlg-footer .cancel { width: 77px; margin-left: auto; }
.dlg-footer .open { width: 77px; margin-left: 9px; background: #e6e6e6; color: #aaa; box-shadow: 0 0 1px #999; }
```
